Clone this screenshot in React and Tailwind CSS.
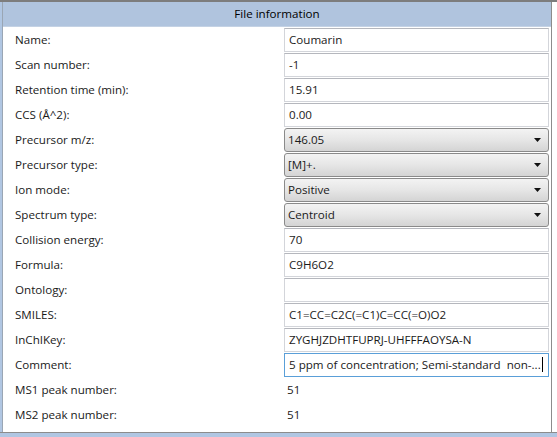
import React from 'react';

const rows = [
  { label: 'Name:', kind: 'text', value: 'Coumarin' },
  { label: 'Scan number:', kind: 'text', value: '-1' },
  { label: 'Retention time (min):', kind: 'text', value: '15.91' },
  { label: 'CCS (Å^2):', kind: 'text', value: '0.00' },
  { label: 'Precursor m/z:', kind: 'combo', value: '146.05' },
  { label: 'Precursor type:', kind: 'combo', value: '[M]+.' },
  { label: 'Ion mode:', kind: 'combo', value: 'Positive' },
  { label: 'Spectrum type:', kind: 'combo', value: 'Centroid' },
  { label: 'Collision energy:', kind: 'text', value: '70' },
  { label: 'Formula:', kind: 'text', value: 'C9H6O2' },
  { label: 'Ontology:', kind: 'text', value: '' },
  { label: 'SMILES:', kind: 'text', value: 'C1=CC=C2C(=C1)C=CC(=O)O2' },
  { label: 'InChIKey:', kind: 'text', value: 'ZYGHJZDHTFUPRJ-UHFFFAOYSA-N' },
  { label: 'Comment:', kind: 'focus', value: '5 ppm of concentration; Semi-standard  non-...' },
  { label: 'MS1 peak number:', kind: 'plain', value: '51' },
  { label: 'MS2 peak number:', kind: 'plain', value: '51' },
];

const Value = ({ row }) => {
  if (row.kind === 'combo') {
    return (
      <div className="h-[24px] flex items-center justify-between rounded-[3px] border border-[#8a8a8a] bg-gradient-to-b from-[#f3f3f3] via-[#e6e6e6] to-[#d4d4d4] pl-[3px] pr-[7px]">
        <span>{row.value}</span>
        <svg width="7" height="4" viewBox="0 0 7 4">
          <path d="M0 0 H7 L3.5 4 Z" fill="#111" />
        </svg>
      </div>
    );
  }
  if (row.kind === 'plain') {
    return <div className="h-[24px] flex items-center pl-[3px]">{row.value}</div>;
  }
  const border =
    row.kind === 'focus'
      ? 'border-[#5a9fd8]'
      : 'border-[#d3d5da] border-t-[#b5b7bd]';
  return (
    <div className={`h-[24px] flex items-center border ${border} bg-white pl-[4px]`}>
      <span className="whitespace-pre">{row.value}</span>
      {row.kind === 'focus' && <span className="w-px h-[15px] bg-black ml-px" />}
    </div>
  );
};

export default function App() {
  return (
    <div
      className="w-[557px] h-[437px] bg-white overflow-hidden flex flex-col text-[11.6px] text-[#1a1a1a]"
      style={{ fontFamily: '"Open Sans", "Noto Sans", sans-serif' }}
    >
      <div className="h-[2px] bg-[#7d7d7d]" />
      <div className="flex flex-1 min-h-0">
        <div className="w-[3px] bg-[#b0c6e2] border-r border-[#9aa6b4]" />
        <div className="flex-1 flex flex-col border-r border-[#8c8c8c]">
          <div className="h-[25px] flex items-center justify-center bg-[#b0c4de] border-b border-[#c4d2e4] text-black">
            File information
          </div>
          <div className="flex-1 pr-[2px]">
            {rows.map((row) => (
              <div key={row.label} className="h-[25px] grid grid-cols-[281px_1fr] items-center">
                <div className="pl-[12px]">{row.label}</div>
                <Value row={row} />
              </div>
            ))}
          </div>
        </div>
        <div className="w-[5px] bg-white" />
      </div>
      <div className="h-[5px] bg-[#b0c6e2] border-t border-[#8c8c8c]" />
    </div>
  );
}
